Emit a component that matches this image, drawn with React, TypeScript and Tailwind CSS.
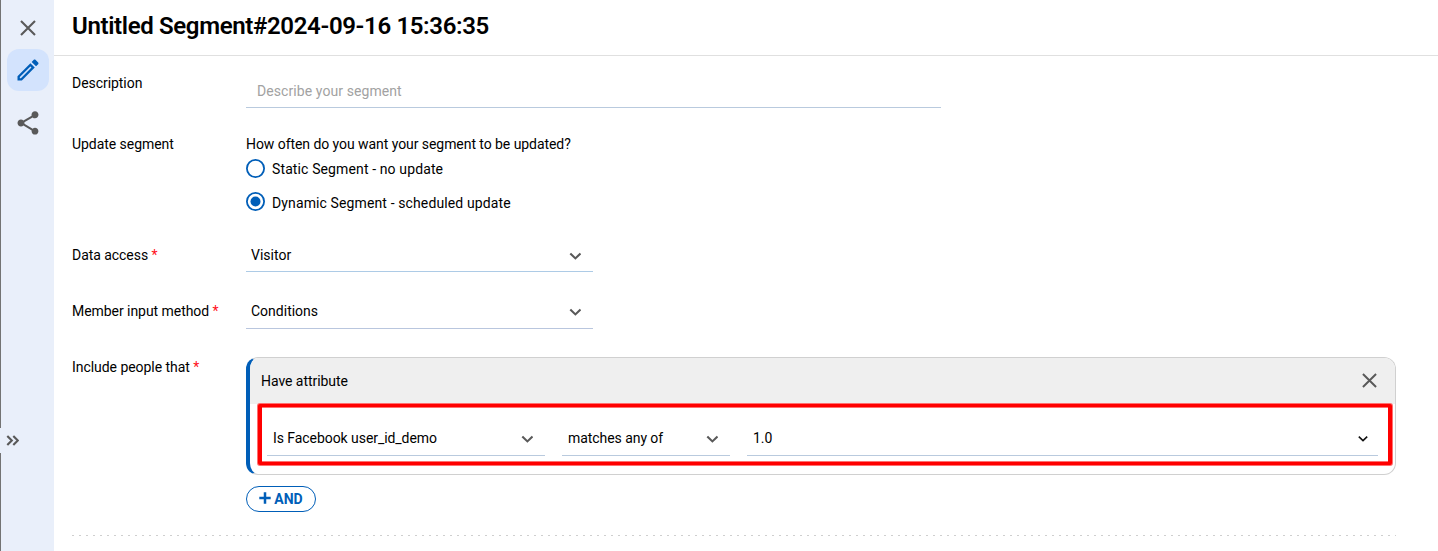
import React from "react";

function Cross({ size, className = "" }: { size: number; className?: string }) {
  return (
    <svg width={size} height={size} viewBox="0 0 16 16" className={className} fill="none" stroke="#595959" strokeWidth="2.1">
      <path d="M1 1 15 15M15 1 1 15" />
    </svg>
  );
}

function Chevron({ small = false }: { small?: boolean }) {
  return small ? (
    <svg width="10" height="6" viewBox="0 0 10 6" className="mt-px shrink-0" fill="none" stroke="#111" strokeWidth="1.6">
      <path d="M.8.7 5 4.7 9.2.7" />
    </svg>
  ) : (
    <svg width="12" height="8" viewBox="0 0 12 8" className="mt-[2px] shrink-0" fill="none" stroke="#595959" strokeWidth="2.1">
      <path d="M1.3 1.4 6.4 6.4 11.5 1.4" />
    </svg>
  );
}

function Label({ text, required = false }: { text: string; required?: boolean }) {
  return (
    <div className="w-[174px] shrink-0 tracking-[-0.05px]">
      {text}
      {required && <span className="text-[#ff1020]"> *</span>}
    </div>
  );
}

function Radio({ label, checked = false }: { label: string; checked?: boolean }) {
  return (
    <div className="flex h-5 items-start gap-[7px]">
      <svg width="19" height="19" viewBox="0 0 19 19" className="shrink-0">
        <circle cx="9.5" cy="9.5" r="8.6" fill="none" stroke="#005eb8" strokeWidth="1.8" />
        {checked && <circle cx="9.5" cy="9.5" r="5" fill="#005eb8" />}
      </svg>
      <span className={checked ? "pt-px tracking-[0.12px]" : "tracking-[0.12px]"}>{label}</span>
    </div>
  );
}

function Sidebar() {
  return (
    <aside className="flex h-full w-[54px] shrink-0 bg-[#e9effa]">
      <div className="flex w-px flex-col">
        <div className="h-[428px] bg-[#737373]" />
        <div className="h-[25px]" />
        <div className="flex-1 bg-[#737373]" />
      </div>
      <div className="flex flex-1 flex-col">
        <div className="flex h-[49px] justify-center pt-5">
          <Cross size={16} />
        </div>
        <div className="ml-[6px] flex h-[42px] w-[42px] items-center justify-center rounded-xl bg-[#d3e3fd]">
          <svg width="28" height="28" viewBox="0 0 24 24" fill="#005eb8">
            <path d="m14.06 9.02.92.92L5.92 19H5v-.92l9.06-9.06M17.66 3c-.25 0-.51.1-.7.29l-1.83 1.83 3.75 3.75 1.83-1.83c.39-.39.39-1.02 0-1.41l-2.34-2.34c-.2-.2-.45-.29-.71-.29zm-3.6 3.19L3 17.25V21h3.75L17.81 9.94l-3.75-3.75z" />
          </svg>
        </div>
        <div className="flex justify-center pt-[18px]">
          <svg width="28" height="28" viewBox="0 0 24 24" fill="#595959">
            <path d="M18 16.08c-.76 0-1.44.3-1.96.77L8.91 12.7c.05-.23.09-.46.09-.7s-.04-.47-.09-.7l7.05-4.11c.54.5 1.25.81 2.04.81 1.66 0 3-1.34 3-3s-1.34-3-3-3-3 1.34-3 3c0 .24.04.47.09.7L8.04 9.81C7.5 9.31 6.79 9 6 9c-1.66 0-3 1.34-3 3s1.34 3 3 3c.79 0 1.5-.31 2.04-.81l7.12 4.16c-.05.21-.08.43-.08.65 0 1.61 1.31 2.92 2.92 2.92s2.92-1.31 2.92-2.92-1.31-2.92-2.92-2.92z" />
          </svg>
        </div>
        <svg width="13" height="11" viewBox="0 0 13 11" className="mt-[298px] ml-[5px]" fill="none" stroke="#595959" strokeWidth="2.1">
          <path d="M1.3 1 5.8 5.5 1.3 10M7.3 1 11.8 5.5 7.3 10" />
        </svg>
      </div>
    </aside>
  );
}

function Select({ value, className, small = false }: { value: string; className: string; small?: boolean }) {
  return (
    <div className={`flex items-center justify-between border-b ${className}`}>
      <span>{value}</span>
      <Chevron small={small} />
    </div>
  );
}

export default function App() {
  return (
    <div className="flex h-[551px] w-full overflow-hidden bg-white font-['Roboto',sans-serif] text-[14px] leading-5 text-black">
      <Sidebar />
      <main className="flex min-w-0 flex-1 flex-col">
        <header className="flex h-14 shrink-0 items-center border-b border-[#e0e0e0] pb-[3px] pl-[18px]">
          <h1 className="text-[24px] leading-8 font-semibold tracking-[-0.35px] whitespace-nowrap">Untitled Segment#2024-09-16 15:36:35</h1>
        </header>
        <div className="flex flex-col pr-[42px] pl-[18px]">
          <section className="flex h-[78px] pt-[17px]">
            <Label text="Description" />
            <div className="h-[35px] w-[695px] border-b border-[#b9cade] pt-2 pl-[11px] tracking-[0.08px] text-[#a2a2a2]">Describe your segment</div>
          </section>
          <section className="flex h-[111px]">
            <Label text="Update segment" />
            <div className="flex flex-col">
              <div className="tracking-[-0.06px]">How often do you want your segment to be updated?</div>
              <div className="mt-[5px] flex flex-col gap-[13px]">
                <Radio label="Static Segment - no update" />
                <Radio label="Dynamic Segment - scheduled update" checked />
              </div>
            </div>
          </section>
          <section className="flex h-14">
            <Label text="Data access" required />
            <Select value="Visitor" className="h-[27px] w-[347px] border-[#adcbe6] pr-3 pb-[6px] pl-[5px]" />
          </section>
          <section className="flex h-14">
            <Label text="Member input method" required />
            <Select value="Conditions" className="h-7 w-[347px] border-[#b9c6de] pr-3 pb-[7px] pl-[5px]" />
          </section>
          <section className="flex h-[129px]">
            <Label text="Include people that" required />
            <div className="relative h-[118px] min-w-0 flex-1 overflow-hidden rounded-xl border border-l-4 border-[#d0d0d0] border-l-[#005eb8]">
              <div className="flex h-[46px] items-center justify-between bg-[#efefef] pr-[18px] pl-[11px]">
                <span className="tracking-[-0.05px]">Have attribute</span>
                <Cross size={15} className="mb-[2px]" />
              </div>
              <div className="flex gap-[17px] pr-[17px] pl-[17px]">
                <Select value="Is Facebook user_id_demo" className="mt-[24px] h-[28px] w-[278px] border-[#b9cade] pr-3 pb-[7px] pl-[6px] tracking-[-0.06px]" />
                <Select value="matches any of" className="mt-[24px] h-[28px] w-[168px] border-[#b9cade] pr-3 pb-[7px] pl-[6px] tracking-[-0.06px]" />
                <Select value="1.0" className="mt-[24px] h-[28px] flex-1 border-[#b9cade] pr-[10px] pb-[7px] pl-[6px]" small />
              </div>
              <div className="absolute top-[45px] right-[2px] left-[7px] h-[63px] rounded-[3px] border-5 border-[#ff7070]" />
              <div className="absolute top-[46px] right-[3px] left-[8px] h-[61px] rounded-[2px] border-x-4 border-y-3 border-[#ff0000]" />
            </div>
          </section>
          <div className="ml-[174px] flex h-[26px] w-[70px] items-center justify-center gap-[3px] rounded-full border border-[#005eb8] text-[#005eb8]">
            <svg width="12" height="12" viewBox="0 0 12 12" className="mb-[2px]" fill="none" stroke="#005eb8" strokeWidth="2.5">
              <path d="M6 .3V11.7M.3 6H11.7" />
            </svg>
            <span className="font-bold">AND</span>
          </div>
          <div className="mt-[23px] h-px bg-[repeating-linear-gradient(90deg,#cfcfcf_0_2px,transparent_2px_7px)]" />
        </div>
      </main>
    </div>
  );
}
